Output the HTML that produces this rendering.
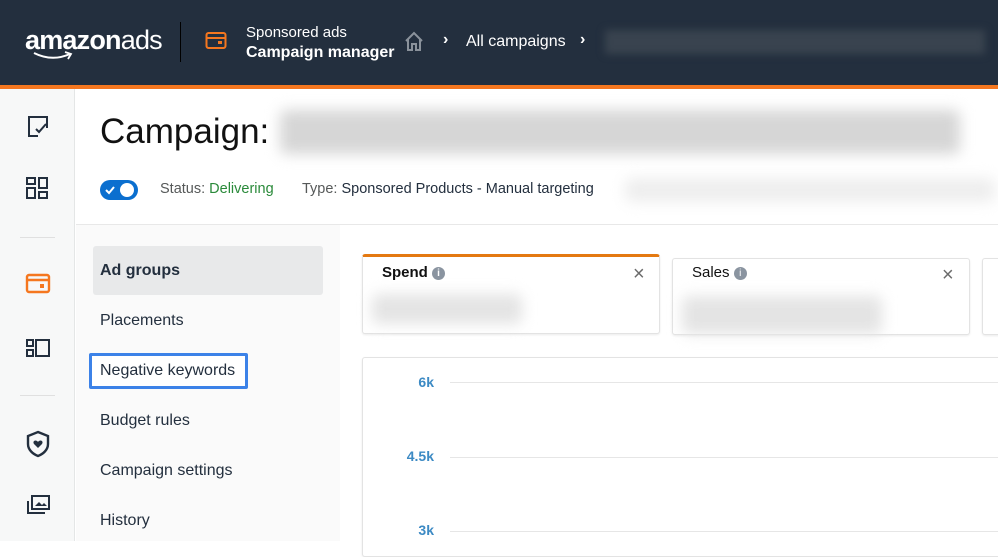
<!DOCTYPE html>
<html><head><meta charset="utf-8"><style>
*{margin:0;padding:0;box-sizing:border-box}
body{width:998px;height:541px;overflow:hidden;font-family:"Liberation Sans",sans-serif;background:#fff;position:relative}
.abs{position:absolute}
.hdr{left:0;top:0;width:998px;height:85px;background:#232f3e}
.org{left:0;top:85px;width:998px;height:4px;background:#f5771f}
.rail{left:0;top:89px;width:75px;height:452px;background:#f7f8f8;border-right:1px solid #e4e6e6}
.blur{background:#ccc;filter:blur(7px);border-radius:6px}
.nav{left:76px;top:225px;width:264px;height:316px;background:#fafafa}
.ni{position:absolute;left:100px;font-size:16px;color:#232f3e}
.card{background:#fff;border:1px solid #e3e3e3;border-radius:3px;box-shadow:0 1px 2px rgba(0,0,0,.08)}
.yl{position:absolute;font-size:14px;font-weight:bold;color:#3c8ac4;text-align:right;width:60px;left:374px}
.gl{position:absolute;left:450px;width:548px;height:1px;background:#e6e6e6}
</style></head><body>
<div class="abs hdr"></div>
<div class="abs" style="left:25px;top:25px;color:#fff;font-size:27px;letter-spacing:-0.8px"><span style="font-weight:bold">amazon</span><span>ads</span></div>
<svg class="abs" style="left:32px;top:50px" width="42" height="12"><path d="M2 3 Q20 12 38 4" stroke="#fff" stroke-width="2" fill="none"/><path d="M33 2 L39 4 L36 9" stroke="#fff" stroke-width="1.8" fill="none"/></svg>
<div class="abs" style="left:180px;top:22px;width:1px;height:40px;background:#000"></div>
<svg class="abs" style="left:205px;top:31px" width="22" height="20"><rect x="1.5" y="2" width="19" height="15" rx="2" fill="none" stroke="#f5771f" stroke-width="2"/><line x1="2" y1="7" x2="20" y2="7" stroke="#f5771f" stroke-width="2"/><rect x="13" y="10" width="4" height="3" fill="#f5771f"/></svg>
<div class="abs" style="left:246px;top:24px;color:#fff;font-size:15px">Sponsored ads</div>
<div class="abs" style="left:246px;top:44px;color:#fff;font-size:16px;font-weight:bold">Campaign manager</div>
<svg class="abs" style="left:403px;top:30px" width="22" height="22"><path d="M3 11 L11 3 L19 11 M5 9 V20 H9 V14 H13 V20 H17 V9" fill="none" stroke="#8a929b" stroke-width="2"/></svg>
<div class="abs" style="left:443px;top:31px;color:#fff;font-size:16px;font-weight:bold">›</div>
<div class="abs" style="left:466px;top:33px;color:#fff;font-size:16px">All campaigns</div>
<div class="abs" style="left:580px;top:31px;color:#fff;font-size:16px;font-weight:bold">›</div>
<div class="abs" style="left:605px;top:30px;width:380px;height:24px;background:#39434f;filter:blur(4px)"></div>
<div class="abs org"></div>
<div class="abs rail"></div>
<svg class="abs" style="left:26px;top:114px" width="24" height="26"><path d="M12 22 H3 V3 H21 V14" fill="none" stroke="#232f3e" stroke-width="2"/><path d="M10 15 L13 18 L20 10" fill="none" stroke="#232f3e" stroke-width="2"/></svg>
<svg class="abs" style="left:25px;top:176px" width="26" height="26"><g fill="none" stroke="#232f3e" stroke-width="2"><rect x="2" y="2" width="8" height="6"/><rect x="2" y="12" width="8" height="10"/><rect x="14" y="2" width="8" height="10"/><rect x="14" y="16" width="8" height="6"/></g></svg>
<div class="abs" style="left:20px;top:237px;width:35px;height:1px;background:#e0e0e0"></div>
<svg class="abs" style="left:25px;top:272px" width="26" height="24"><rect x="2" y="3" width="22" height="17" rx="2" fill="none" stroke="#f5771f" stroke-width="2.4"/><line x1="2" y1="8" x2="24" y2="8" stroke="#f5771f" stroke-width="2.4"/><rect x="15" y="12" width="4" height="4" fill="#f5771f"/></svg>
<svg class="abs" style="left:25px;top:337px" width="26" height="24"><g fill="none" stroke="#232f3e" stroke-width="2"><rect x="2" y="3" width="6" height="6"/><rect x="2" y="13" width="6" height="6"/><rect x="11" y="3" width="13" height="16"/></g></svg>
<div class="abs" style="left:20px;top:395px;width:35px;height:1px;background:#e0e0e0"></div>
<svg class="abs" style="left:25px;top:430px" width="26" height="28"><path d="M13 2 L23 6 V14 C23 20 18 24 13 26 C8 24 3 20 3 14 V6 Z" fill="none" stroke="#232f3e" stroke-width="2.4"/><path d="M13 18 L9 14 C7 11 11 9 13 12 C15 9 19 11 17 14 Z" fill="#232f3e"/></svg>
<svg class="abs" style="left:25px;top:493px" width="26" height="26"><g fill="none" stroke="#232f3e" stroke-width="2"><rect x="7" y="3" width="17" height="13"/><path d="M3 8 V20 H20"/></g><path d="M10 13 L14 9 L17 12 L19 10 L22 13 Z" fill="#232f3e"/></svg>
<div class="abs" style="left:76px;top:89px;width:922px;height:136px;background:#fff;border-bottom:1px solid #e8e8e8"></div>
<div class="abs" style="left:100px;top:112px;font-size:35px;color:#111">Campaign:</div>
<div class="abs blur" style="left:280px;top:110px;width:680px;height:44px;background:#d6d6d6"></div>
<div class="abs" style="left:100px;top:180px;width:38px;height:20px;border-radius:10px;background:#0b6fcf"></div>
<div class="abs" style="left:120px;top:183px;width:14px;height:14px;border-radius:7px;background:#fff"></div>
<svg class="abs" style="left:104px;top:184px" width="12" height="12"><path d="M2 6 L5 9 L10 3" fill="none" stroke="#fff" stroke-width="2"/></svg>
<div class="abs" style="left:160px;top:181px;font-size:14.5px;color:#565959">Status: <span style="color:#2a8a3a">Delivering</span></div>
<div class="abs" style="left:302px;top:181px;font-size:14.5px;color:#565959">Type: <span style="color:#232f3e">Sponsored Products - Manual targeting</span></div>
<div class="abs blur" style="left:625px;top:178px;width:370px;height:24px;background:#eeeeee"></div>
<div class="abs nav"></div>
<div class="abs" style="left:93px;top:246px;width:230px;height:49px;background:#e8e9ea;border-radius:3px"></div>
<div class="ni" style="top:262px;font-weight:bold">Ad groups</div>
<div class="ni" style="top:312px">Placements</div>
<div class="abs" style="left:89px;top:353px;width:159px;height:36px;border:3px solid #3c82e8;border-radius:2px;background:#fff"></div>
<div class="ni" style="top:362px">Negative keywords</div>
<div class="ni" style="top:412px">Budget rules</div>
<div class="ni" style="top:462px">Campaign settings</div>
<div class="ni" style="top:512px">History</div>
<div class="abs card" style="left:362px;top:254px;width:298px;height:80px;border-top:3px solid #e47911"></div>
<div class="abs" style="left:382px;top:264px;font-size:15px;font-weight:bold;color:#111">Spend <span style="display:inline-block;width:13px;height:13px;border-radius:7px;background:#8a94a0;color:#fff;font-size:10px;text-align:center;line-height:13px;vertical-align:1px">i</span></div>
<div class="abs" style="left:633px;top:263px;font-size:20px;color:#6b6b6b">×</div>
<div class="abs blur" style="left:372px;top:294px;width:150px;height:30px;background:#e4e4e4"></div>
<div class="abs card" style="left:672px;top:258px;width:298px;height:77px"></div>
<div class="abs" style="left:692px;top:264px;font-size:15px;color:#111">Sales <span style="display:inline-block;width:13px;height:13px;border-radius:7px;background:#8a94a0;color:#fff;font-size:10px;text-align:center;line-height:13px;vertical-align:1px">i</span></div>
<div class="abs" style="left:942px;top:264px;font-size:20px;color:#6b6b6b">×</div>
<div class="abs blur" style="left:682px;top:296px;width:200px;height:38px;background:#e4e4e4"></div>
<div class="abs card" style="left:982px;top:258px;width:30px;height:77px"></div>
<div class="abs card" style="left:362px;top:357px;width:650px;height:200px"></div>
<div class="yl" style="top:374px">6k</div><div class="gl" style="top:382px"></div>
<div class="yl" style="top:448px">4.5k</div><div class="gl" style="top:457px"></div>
<div class="yl" style="top:522px">3k</div><div class="gl" style="top:531px"></div>
</body></html>
